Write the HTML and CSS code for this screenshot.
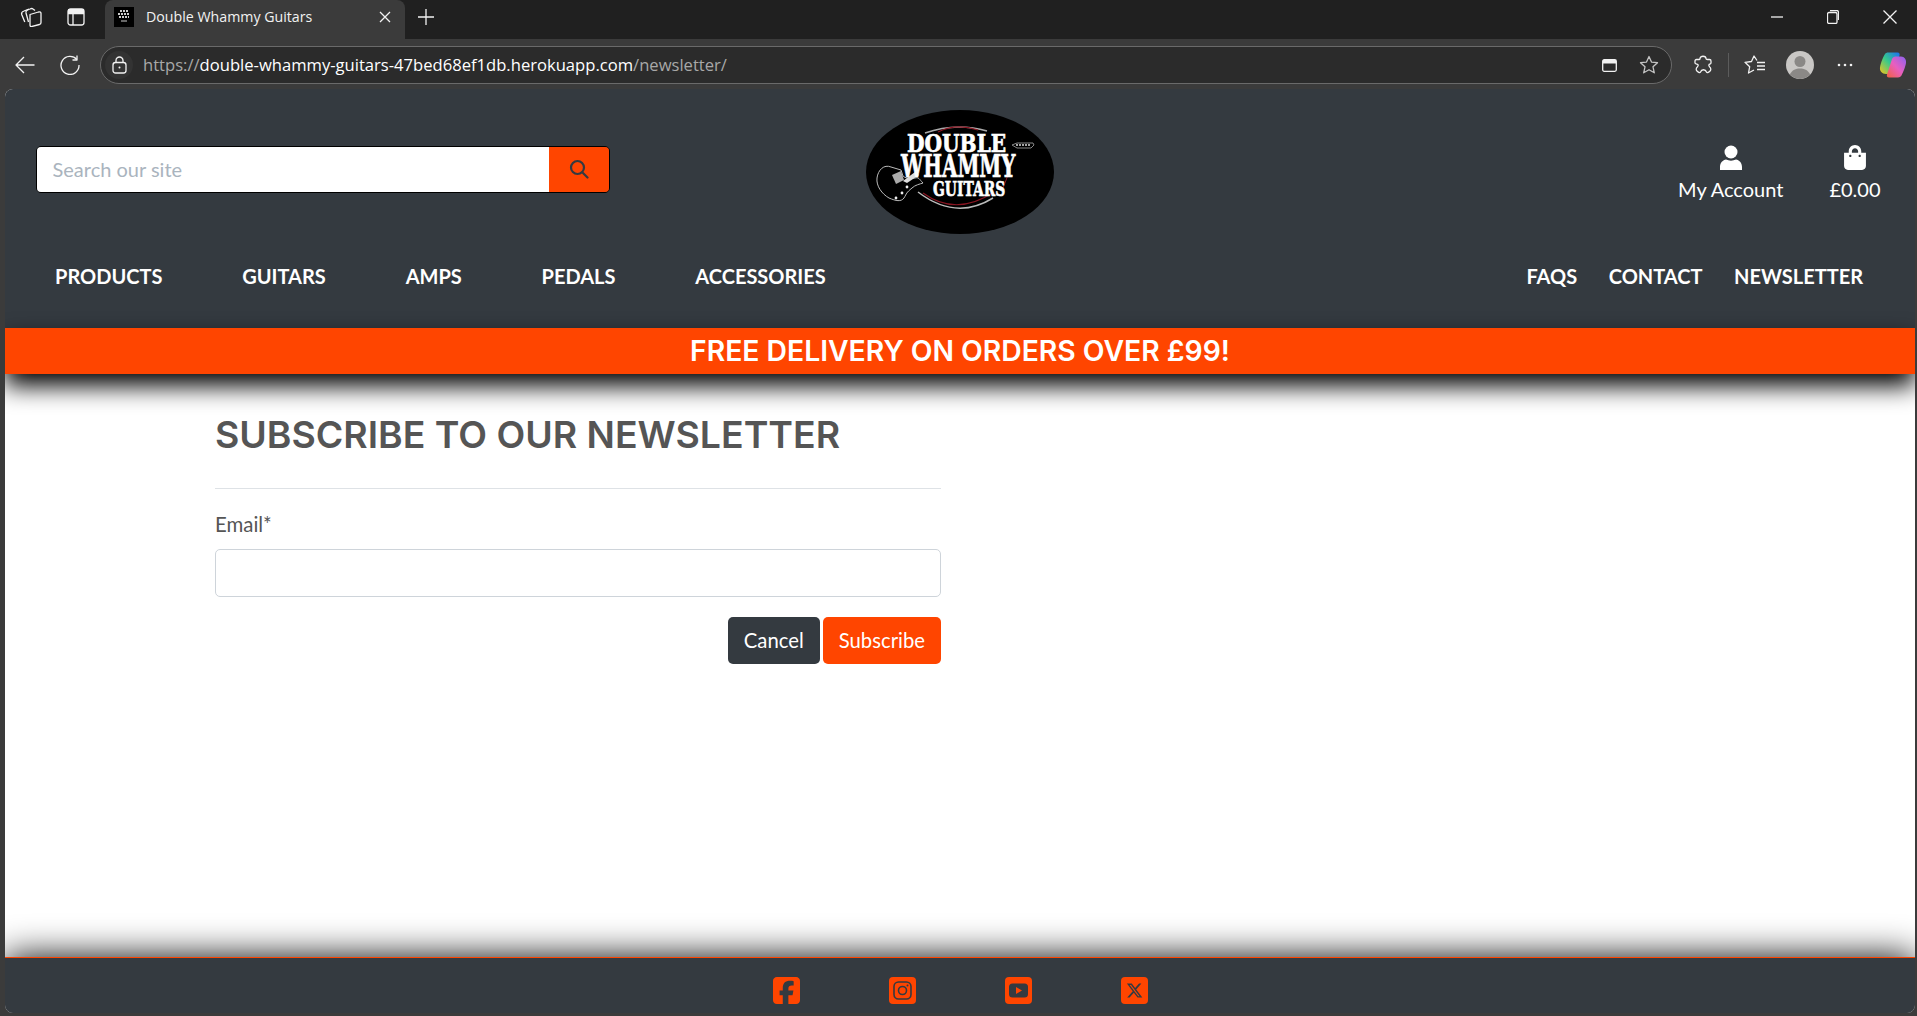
FILE: index.html
```html
<!DOCTYPE html>
<html lang="en">
<head>
  <meta charset="UTF-8" />
  <meta name="viewport" content="width=device-width, initial-scale=1" />
  <title>Double Whammy Guitars</title>
  <link rel="stylesheet" href="styles.css">
</head>
<body>
  <!-- Browser frame -->
  <div class="tabstrip">
    <div class="strip-icons">
      <svg class="ico" width="22" height="20" viewBox="0 0 22 20"><path d="M10 7.500 18.500 5Q21 4.500 21 6.500V15.500Q21 17 19.500 17.500L12 19.500Q10 20 10 18z"/><path d="M15 3.500 13 2Q12 1 10 2L7.500 3Q5.500 4 6 6L8.500 15"/><path d="M9 2.200 4 4Q1 5 1.700 7.500L4.800 15"/></svg>
      <svg class="ico" width="18" height="18" viewBox="0 0 18 18"><rect x="1" y="1" width="16" height="16" rx="2.500"/><path d="M1 5.500h16M6 5.500V17"/><path class="fill" d="M1 1h16v4.500H1z"/></svg>
    </div>
    <div class="tab">
      <svg class="favicon" width="20" height="20" viewBox="0 0 20 20"><rect width="20" height="20" fill="#000"/><path d="M6 4h8M4 7h12M5 10h10" stroke="#ccc" stroke-width="2" stroke-dasharray="2 1" fill="none"/><path d="M7 14h6" stroke="#888" stroke-width="1.500"/></svg>
      <span class="tab-title">Double Whammy Guitars</span>
      <svg class="ico tab-close" width="12" height="12" viewBox="0 0 12 12"><path d="M1 1l10 10M11 1 1 11"/></svg>
    </div>
    <svg class="ico new-tab" width="16" height="16" viewBox="0 0 16 16"><path d="M8 0v16M0 8h16"/></svg>
    <div class="window-btns">
      <svg class="ico" width="12" height="12" viewBox="0 0 12 12"><path d="M0 6h12"/></svg>
      <svg class="ico" width="12" height="14" viewBox="0 0 12 14"><rect x=".5" y="2.500" width="9.500" height="11" rx="1.500"/><path d="M3 .5h6.500c1 0 2 1 2 2V10"/></svg>
      <svg class="ico" width="14" height="14" viewBox="0 0 14 14"><path d="M.5.5l13 13M13.500.5l-13 13"/></svg>
    </div>
  </div>
  <div class="toolbar">
    <svg class="ico back" width="20" height="20" viewBox="0 0 20 20"><path d="M19.500 10H1M9 2l-8 8 8 8"/></svg>
    <svg class="ico reload" width="20" height="20" viewBox="0 0 20 20"><path d="M16.800 4.500A9 9 0 1 0 19 10"/><path d="M17 .5v4.500h-4.500"/></svg>
    <div class="urlbar">
      <span class="lock-wrap"><svg class="ico" width="15" height="18" viewBox="0 0 15 18"><rect x="1" y="6.500" width="13" height="10.500" rx="2.500"/><path d="M4 6.500V4.500a3.500 3.500 0 0 1 7 0v2"/><circle class="fill" cx="7.500" cy="11.500" r="1"/></svg></span>
      <span class="url"><span class="dim">https://</span>double-whammy-guitars-47bed68ef1db.herokuapp.com<span class="dim">/newsletter/</span></span>
      <svg class="ico reader" width="15" height="13" viewBox="0 0 15 13"><rect x=".7" y=".7" width="13.600" height="11.600" rx="1.500"/><path class="fill" d="M1 1h13v3.500H1z"/></svg>
      <svg class="ico star" width="20" height="20" viewBox="0 0 20 20"><path d="M10 1.500l2.500 5.600 6 .6-4.500 4.100 1.300 6L10 14.700l-5.300 3.100 1.300-6L1.500 7.700l6-.6z"/></svg>
    </div>
    <svg class="ico puzzle" width="20" height="20" viewBox="0 0 20 20"><path d="M7 3.500c0-3 6-3 6 0 0 1 .5 1 1.500 1h2c1 0 1.500.5 1.500 1.500v2c0 1-1.500 1-2 1.500-1 1.500 1 2.500 1.500 3.500.5 1 .5 1.500 0 2.500l-1 1c-1 1-2.500 1.500-3 .5-1-3-5-3-6 0-.5 1-2 .5-3-.5l-1-1c-.5-1-.5-1.500 0-2.500.5-1 2.500-2 1.500-3.500C3.500 9 2 9 2 8V6c0-1 .5-1.500 1.500-1.500h2C6.500 4.500 7 4.500 7 3.500z"/></svg>
    <span class="tool-sep"></span>
    <svg class="ico favs" width="22" height="20" viewBox="0 0 22 20"><path d="M13 5.500 10 1 7.500 6.500 1 7.300l4.700 4.400L4.500 18 10 15"/><path d="M13 7.500h8M13 11h8M13 14.500h8"/></svg>
    <svg class="avatar" width="28" height="28" viewBox="0 0 28 28"><circle cx="14" cy="14" r="14" fill="#c9c7c5"/><circle cx="14" cy="10.500" r="5.500" fill="#8a8886"/><path d="M3.800 23.500C6 19 10 17.500 14 17.500s8 1.500 10.200 6A14 14 0 0 1 3.800 23.500z" fill="#8a8886"/></svg>
    <svg class="dots" width="16" height="4" viewBox="0 0 16 4"><circle cx="2" cy="2" r="1.300"/><circle cx="8" cy="2" r="1.300"/><circle cx="14" cy="2" r="1.300"/></svg>
    <svg class="copilot" width="28" height="28" viewBox="0 0 28 28">
      <defs>
        <linearGradient id="cpA" x1="0" y1="1" x2="1" y2="0"><stop offset="0" stop-color="#f5c518"/><stop offset=".5" stop-color="#36c98d"/><stop offset="1" stop-color="#1c6ef2"/></linearGradient>
        <linearGradient id="cpB" x1="0" y1="1" x2="1" y2="0"><stop offset="0" stop-color="#f2613f"/><stop offset=".5" stop-color="#e85fc0"/><stop offset="1" stop-color="#8a62f0"/></linearGradient>
      </defs>
      <path d="M9 1.500h9.500c2 0 2.500 1.500 2 3L15 21c-.5 1.500-2 2-3 2H7C3 23 .5 20 1 16.500 1.500 12 5 4 6 3c.8-1 1.800-1.500 3-1.500z" fill="url(#cpA)"/>
      <path d="M19 26.500H10c-2 0-2.500-1.500-2-3L13 8c.5-1.500 2-2.500 3.500-2.500H22c3.500 0 5.500 3 5 6.500-.5 4-3.500 10.500-4.500 12.500-.8 1.300-2 2-3.500 2z" fill="url(#cpB)"/>
    </svg>
  </div>

  <!-- Site -->
  <div class="site">
    <header class="site-header">
      <div class="top-row">
        <form class="search">
          <input class="search-input" type="text" placeholder="Search our site">
          <button class="search-btn" type="button" aria-label="Search">
            <svg width="20" height="20" viewBox="0 0 20 20" fill="none" stroke="#343a40" stroke-width="2.200" stroke-linecap="round"><circle cx="8.500" cy="8.500" r="6.500"/><path d="M13.500 13.500 18.500 18.500"/></svg>
          </button>
        </form>
        <a class="logo" href="#">
          <svg width="188" height="124" viewBox="0 0 188 124">
            <ellipse cx="94" cy="62" rx="94" ry="62" fill="#000"/>
            <path d="M59 23Q90 12 121 21" fill="none" stroke="#aaa" stroke-width="1.500"/>
            <path d="M72 22Q90 13 112 20" fill="none" stroke="#8a1522" stroke-width="1.200"/>
            <path d="M57 83Q90 107 128 82" fill="none" stroke="#8a1522" stroke-width="1.200"/>
            <path d="M52 82Q90 111 127 88" fill="none" stroke="#bbb" stroke-width="1.500"/>
            <path d="M142 65 137 78" stroke="#8a1522" stroke-width="1"/>
            <path d="M25 57C18 54 12 60 11 68c-1 8 5 16 12 20 7 3 12 4 15 0 3-5 2-5 8-10 3-3 8-4 11-5-4-4-4-6-8-5-6 1-10 0-12-2L35 60z" fill="none" stroke="#bbb" stroke-width="1"/>
            <path d="M26 65l9-4 3 9-8 4z" fill="#aaa"/>
            <path d="M37 71l12-9 4 3-12 8z" fill="#ddd"/>
            <circle cx="36" cy="83" r="1.400" fill="#eee"/><circle cx="30" cy="88" r="1.400" fill="#eee"/><circle cx="41" cy="77" r="1.400" fill="#eee"/>
            <path d="M146 35l5-2h16l1 2-3 3h-14z" fill="none" stroke="#888" stroke-width="1"/>
            <path d="M150 35h15" stroke="#ddd" stroke-width="1.500" stroke-dasharray="2 1"/>
            <text class="logo-text" transform="translate(41 42) scale(.84 1)" font-size="24">DOUBLE</text>
            <text class="logo-text" transform="translate(35 67) scale(.64 1)" font-size="31">WHAMMY</text>
            <text class="logo-text" transform="translate(67 86) scale(.66 1)" font-size="21">GUITARS</text>
          </svg>
        </a>
        <div class="account">
          <a class="account-link" href="#">
            <svg width="22" height="25" viewBox="0 0 22 25" fill="#fff"><circle cx="11" cy="7" r="6.500"/><path d="M0 25v-3c0-4.500 3-7 6-7.500 3 1.500 7 1.500 10 0 3 .5 6 3 6 7.500v3z"/></svg>
            <span>My Account</span>
          </a>
          <a class="account-link" href="#">
            <svg width="22" height="25" viewBox="0 0 448 512" fill="#fff"><path d="M352 160v-32C352 57.420 294.579 0 224 0 153.420 0 96 57.420 96 128v32H0v272c0 44.183 35.817 80 80 80h288c44.183 0 80-35.817 80-80V160h-96zm-192-32c0-35.290 28.710-64 64-64s64 28.710 64 64v32H160v-32zm160 120c-13.255 0-24-10.745-24-24s10.745-24 24-24 24 10.745 24 24-10.745 24-24 24zm-192 0c-13.255 0-24-10.745-24-24s10.745-24 24-24 24 10.745 24 24-10.745 24-24 24z"/></svg>
            <span>£0.00</span>
          </a>
        </div>
      </div>
      <nav class="main-nav">
        <ul class="nav-left">
          <li><a href="#">PRODUCTS</a></li>
          <li><a href="#">GUITARS</a></li>
          <li><a href="#">AMPS</a></li>
          <li><a href="#">PEDALS</a></li>
          <li><a href="#">ACCESSORIES</a></li>
        </ul>
        <ul class="nav-right">
          <li><a href="#">FAQS</a></li>
          <li><a href="#">CONTACT</a></li>
          <li><a href="#">NEWSLETTER</a></li>
        </ul>
      </nav>
    </header>
    <div class="banner">FREE DELIVERY ON ORDERS OVER £99!</div>

    <main class="content">
      <div class="form-col">
        <h1>SUBSCRIBE TO OUR NEWSLETTER</h1>
        <hr>
        <form>
          <label for="email">Email*</label>
          <input id="email" class="field" type="email">
          <div class="actions">
            <a class="btn btn-dark" href="#">Cancel</a>
            <button class="btn btn-orange" type="button">Subscribe</button>
          </div>
        </form>
      </div>
    </main>

    <footer class="site-footer">
      <a href="#" aria-label="Facebook">
        <svg width="27" height="27" viewBox="0 32 448 448" fill="#ff4500"><path d="M64 32C28.700 32 0 60.700 0 96V416c0 35.300 28.700 64 64 64h98.200V334.200H109.400V256h52.800V222.300c0-87.100 39.400-127.400 125-127.400c16.200 0 44.200 3.200 55.700 6.400V172c-6-.6-16.500-1-29.600-1c-42 0-58.200 15.900-58.200 57.200V256h83.600l-14.400 78.200H255V480H384c35.300 0 64-28.700 64-64V96c0-35.300-28.700-64-64-64H64z"/></svg>
      </a>
      <a href="#" aria-label="Instagram">
        <svg width="27" height="27" viewBox="0 0 27 27"><rect width="27" height="27" rx="4" fill="#ff4500"/><rect x="5" y="5" width="17" height="17" rx="4.500" fill="none" stroke="#343a40" stroke-width="1.600"/><circle cx="13.500" cy="13.500" r="4" fill="none" stroke="#343a40" stroke-width="1.600"/><circle cx="18.500" cy="8.500" r="1" fill="#343a40"/></svg>
      </a>
      <a href="#" aria-label="YouTube">
        <svg width="27" height="27" viewBox="0 0 27 27"><rect width="27" height="27" rx="4" fill="#ff4500"/><rect x="4" y="6.500" width="19" height="14" rx="3.500" fill="#343a40"/><path d="M11 10v7l6-3.500z" fill="#ff4500"/></svg>
      </a>
      <a href="#" aria-label="X">
        <svg width="27" height="27" viewBox="0 0 27 27"><rect width="27" height="27" rx="4" fill="#ff4500"/><path transform="translate(5 5) scale(.0335)" d="M389.200 48h70.600L305.600 224.200 487 464H345L233.700 318.600 106.500 464H35.800L200.700 275.500 26.800 48H172.400L272.900 180.900 389.200 48zM364.400 421.800h39.100L151.100 88h-42L364.400 421.800z" fill="#343a40"/></svg>
      </a>
    </footer>
  </div>
</body>
</html>
```
FILE: styles.css
```css
/* Browser frame */
html, body {
  height: 100%;
}
body {
  margin: 0;
  background: #3b3b3b;
  font-family: "Lato", sans-serif;
  overflow: hidden;
  display: flex;
  flex-direction: column;
}
.ico {
  fill: none;
  stroke: #f2f2f2;
  stroke-width: 1.3;
  stroke-linejoin: round;
  flex: none;
}
.ico .fill {
  fill: #f2f2f2;
  stroke: none;
}
.tabstrip {
  height: 39px;
  background: #202020;
  display: flex;
  align-items: center;
  flex: none;
  box-sizing: border-box;
  padding-bottom: 5px;
}
.strip-icons {
  display: flex;
  align-items: center;
  gap: 25px;
  padding-left: 20px;
  width: 85px;
}
.tab {
  width: 300px;
  height: 39px;
  margin-bottom: -5px;
  background: #3b3b3b;
  border-radius: 8px 8px 0 0;
  display: flex;
  align-items: center;
  padding: 0 14px 5px 9px;
  box-sizing: border-box;
}
.favicon {
  flex: none;
}
.tab-title {
  flex: 1;
  margin: 0 0 2px 12px;
  color: #f2f2f2;
  font: 14.2px "Open Sans", sans-serif;
}
.new-tab {
  margin-left: 13px;
}
.window-btns {
  margin-left: auto;
  display: flex;
  align-items: center;
  gap: 44px;
  padding-right: 20px;
}
.toolbar {
  height: 50px;
  display: flex;
  align-items: center;
  flex: none;
  box-sizing: border-box;
  padding: 2px 10px 0 15px;
}
.reload {
  margin-left: 25px;
}
.urlbar {
  margin-left: 20px;
  width: 1574px;
  height: 38px;
  box-sizing: border-box;
  border: 1px solid #6a6a6a;
  border-radius: 19px;
  background: #2b2b2b;
  display: flex;
  align-items: center;
  padding: 0 12px 0 4px;
}
.lock-wrap {
  width: 28px;
  height: 28px;
  border-radius: 50%;
  background: #333;
  display: flex;
  align-items: center;
  justify-content: center;
}
.url {
  margin: 0 0 2px 10px;
  font: 16.6px "Open Sans", sans-serif;
  color: #fff;
  white-space: nowrap;
  flex: 1;
}
.url .dim {
  color: #a8a8a8;
}
.star {
  margin-left: 22px;
  stroke: #c4c4c4;
}
.puzzle {
  margin-left: 21px;
}
.tool-sep {
  width: 1px;
  height: 24px;
  background: #5c5c5c;
  margin-left: 15px;
}
.favs {
  margin-left: 15px;
}
.avatar {
  margin-left: 20px;
  flex: none;
}
.dots {
  margin-left: 23px;
  fill: #f2f2f2;
  flex: none;
}
.copilot {
  margin-left: 26px;
  flex: none;
}

/* Site */
.site {
  flex: 1;
  margin: 0 2px 3px 5px;
  background: #fff;
  border-radius: 8px;
  display: flex;
  flex-direction: column;
  overflow: hidden;
  min-height: 0;
}
.site-header {
  background: #343a40;
  flex: none;
}
.top-row {
  display: grid;
  grid-template-columns: 1fr 188px 1fr;
  align-items: center;
  padding: 21px 32px 0 31px;
}
.search {
  display: flex;
  width: 574px;
  height: 47px;
  border: 1px solid #000;
  border-radius: 5px;
  overflow: hidden;
  box-sizing: border-box;
  margin: 0 0 6px -.5px;
}
.search-input {
  flex: 1;
  min-width: 0;
  border: 0;
  padding: 0 16px;
  font: 20px "Lato", sans-serif;
  outline: none;
}
.search-input::placeholder {
  color: #aab4be;
}
.search-btn {
  width: 60px;
  border: 0;
  background: #ff4500;
  padding: 0;
  display: flex;
  align-items: center;
  justify-content: center;
}
.logo {
  display: block;
  height: 124px;
}
.logo-text {
  font-family: "DejaVu Serif", serif;
  font-weight: 700;
  fill: #fff;
  stroke: #fff;
  stroke-width: .7;
}
.account {
  display: flex;
  justify-content: flex-end;
  gap: 46px;
  padding-right: 2.5px;
  margin-top: 2px;
}
.account-link {
  display: flex;
  flex-direction: column;
  align-items: center;
  gap: 7px;
  color: #fff;
  text-decoration: none;
  font-size: 20px;
}
.main-nav {
  display: flex;
  justify-content: space-between;
  padding: 30px 52px 40px 50px;
}
.main-nav ul {
  list-style: none;
  margin: 0;
  padding: 0;
  display: flex;
}
.nav-left {
  gap: 79.8px;
}
.nav-right {
  gap: 31.5px;
}
.main-nav a {
  color: #fff;
  text-decoration: none;
  font-size: 20px;
  font-weight: 700;
  line-height: 24px;
}
.banner {
  flex: none;
  height: 46px;
  background: #ff4500;
  color: #fff;
  font: 600 28.3px/46px "Inter", sans-serif;
  text-align: center;
  box-shadow: 0 12px 24px #000;
  position: relative;
}
.content {
  flex: 1;
  padding: 41px 0 0 210px;
}
.form-col {
  width: 726px;
}
h1 {
  margin: 0;
  font: 600 37.4px/40px "Inter", sans-serif;
  color: #555;
}
hr {
  margin: 33px 0 0;
  border: 0;
  border-top: 1px solid #dee2e6;
}
label {
  display: block;
  margin-top: 23px;
  font-size: 20.4px;
  line-height: 24px;
  color: #555;
}
.field {
  display: block;
  width: 100%;
  height: 48px;
  margin-top: 13px;
  box-sizing: border-box;
  border: 1px solid #ced4da;
  border-radius: 5px;
}
.actions {
  display: flex;
  justify-content: flex-end;
  gap: 3px;
  margin-top: 20px;
}
.btn {
  display: block;
  height: 47px;
  box-sizing: border-box;
  padding: 0 16px;
  border: 0;
  border-radius: 5px;
  color: #fff;
  font: 20.3px/47px "Lato", sans-serif;
  text-decoration: none;
}
.btn-dark {
  background: #343a40;
}
.btn-orange {
  background: #ff4500;
}
.site-footer {
  flex: none;
  height: 56px;
  background: #343a40;
  border-top: 1px solid #ff4500;
  box-shadow: 0 0 36px #000;
  display: flex;
  justify-content: center;
  gap: 89px;
  padding-top: 19px;
  box-sizing: border-box;
  position: relative;
}
.site-footer svg {
  display: block;
}
```
